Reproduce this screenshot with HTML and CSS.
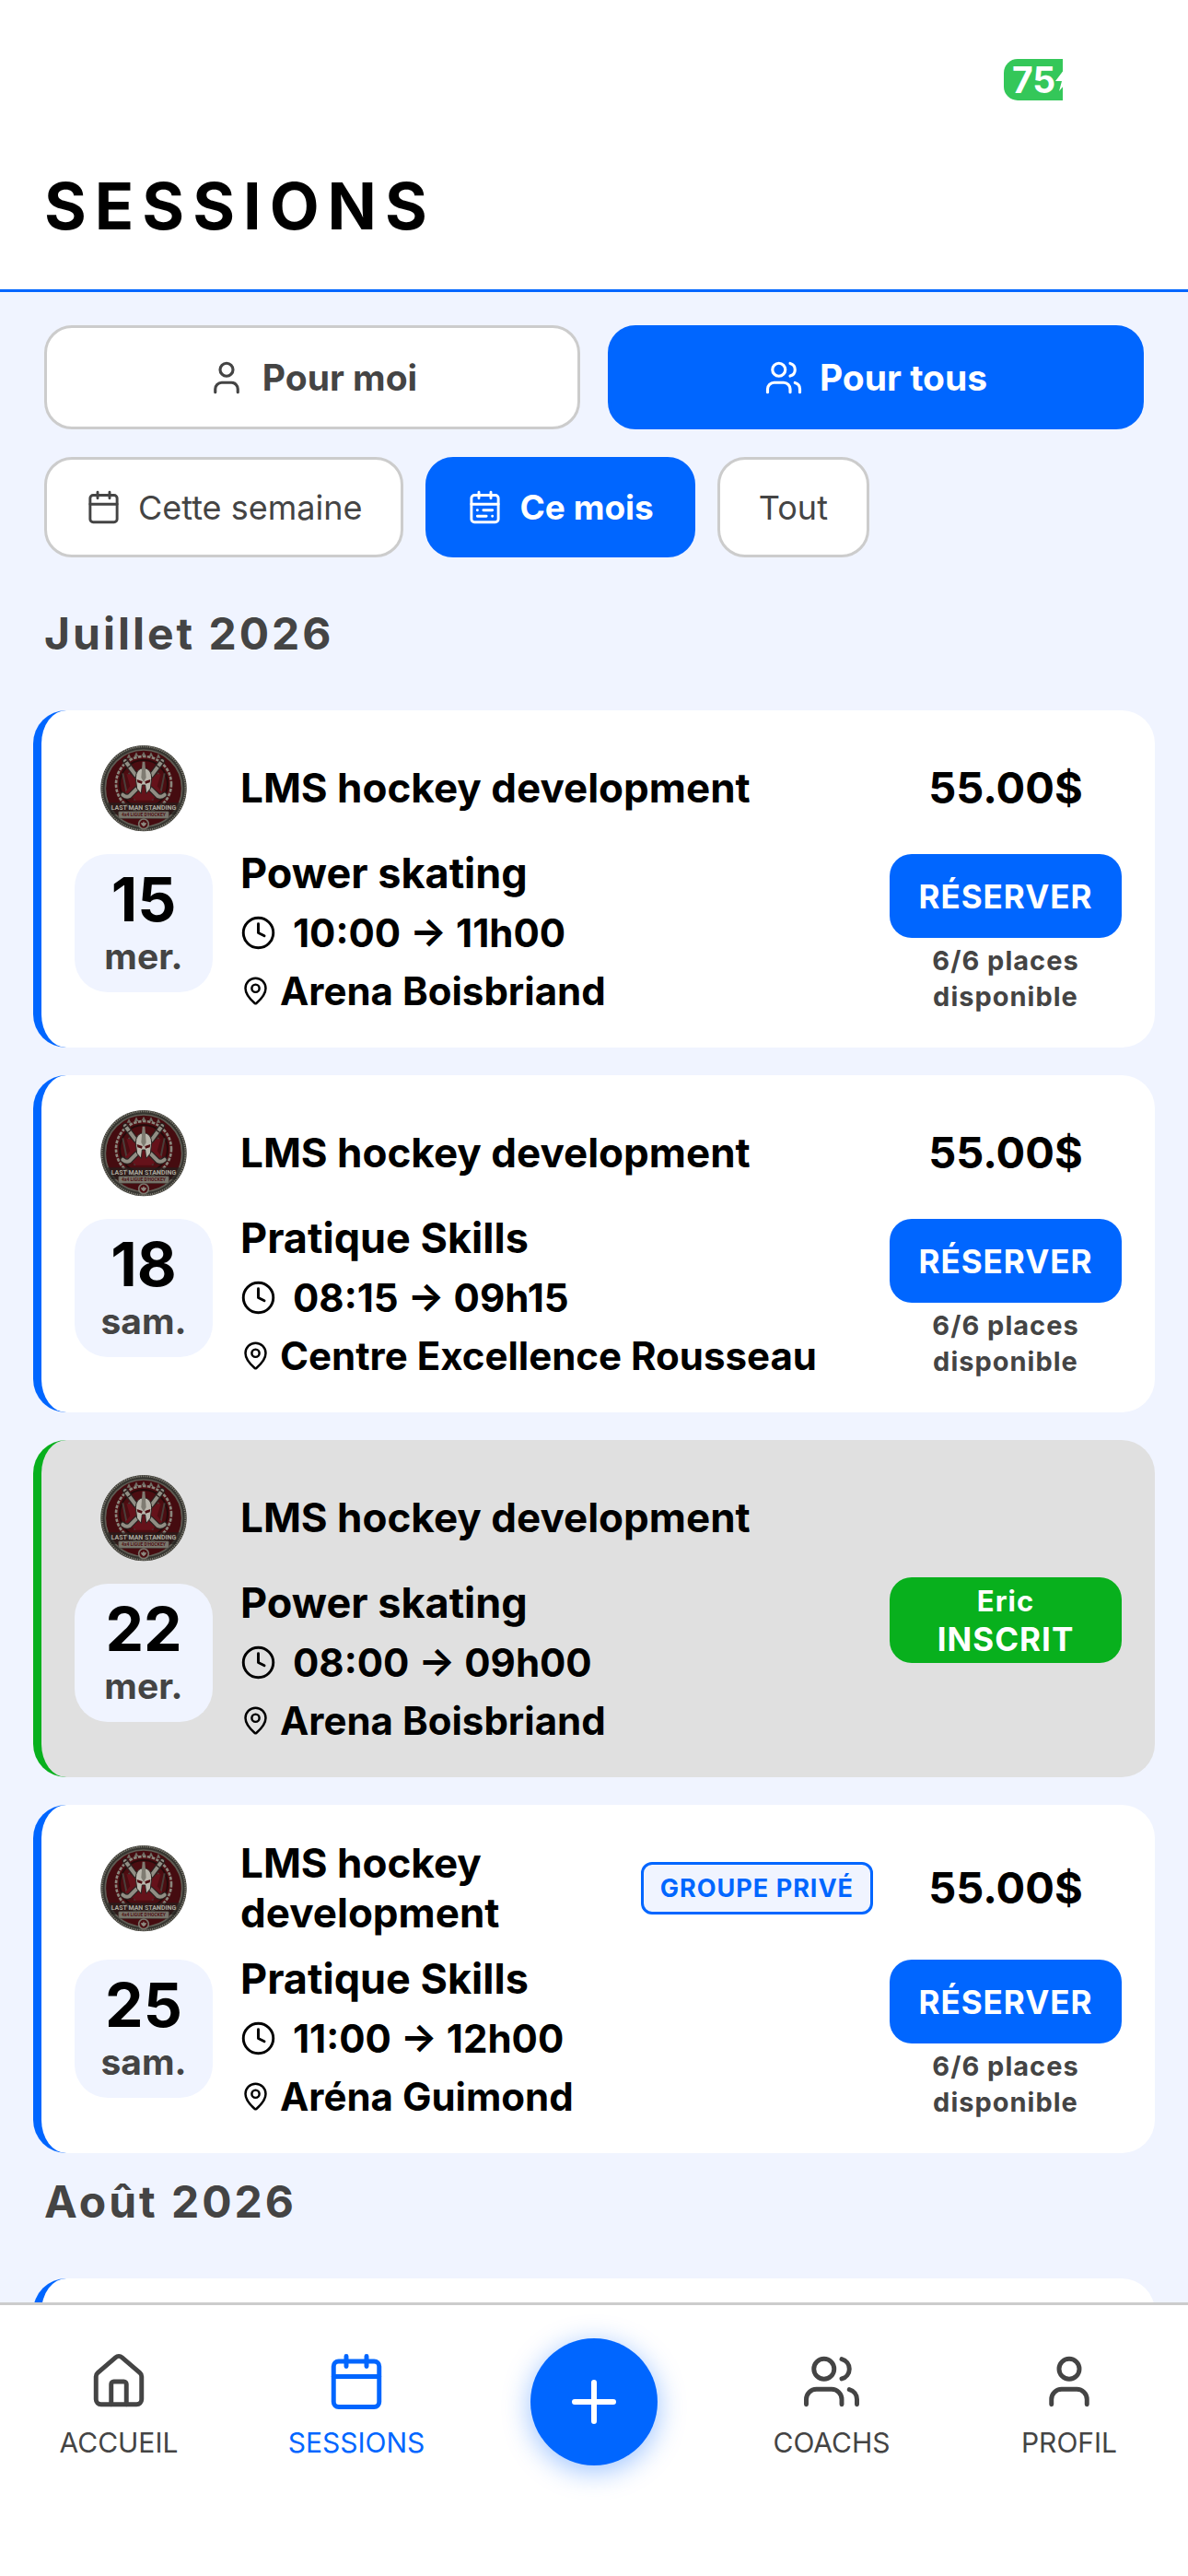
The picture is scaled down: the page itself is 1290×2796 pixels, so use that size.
FILE: index.html
```html
<!DOCTYPE html>
<html lang="fr">
<head>
<meta charset="utf-8">
<meta name="viewport" content="width=device-width, initial-scale=1">
<title>Sessions</title>
<link rel="stylesheet" href="styles.css">
</head>
<body>
<svg class="sprite" aria-hidden="true">
  <symbol id="user" viewBox="0 0 24 24"><path d="M19 21v-2a4 4 0 0 0-4-4H9a4 4 0 0 0-4 4v2"/><circle cx="12" cy="7" r="4"/></symbol>
  <symbol id="users" viewBox="0 0 24 24"><path d="M16 21v-2a4 4 0 0 0-4-4H6a4 4 0 0 0-4 4v2"/><circle cx="9" cy="7" r="4"/><path d="M22 21v-2a4 4 0 0 0-3-3.87"/><path d="M16 3.13a4 4 0 0 1 0 7.75"/></symbol>
  <symbol id="calendar" viewBox="0 0 24 24"><path d="M8 2v4M16 2v4M3 10h18"/><rect x="3" y="4" width="18" height="18" rx="2"/></symbol>
  <symbol id="calendar-range" viewBox="0 0 24 24"><path d="M8 2v4M16 2v4M3 10h18M17 14h-6M13 18H7M7 14h.01M17 18h.01"/><rect x="3" y="4" width="18" height="18" rx="2"/></symbol>
  <symbol id="clock" viewBox="0 0 24 24"><circle cx="12" cy="12" r="10"/><path d="M12 6v6l4 2"/></symbol>
  <symbol id="pin" viewBox="0 0 24 24"><path d="M20 10c0 4.993-5.539 10.193-7.399 11.799a1 1 0 0 1-1.202 0C9.539 20.193 4 14.993 4 10a8 8 0 0 1 16 0"/><circle cx="12" cy="10" r="3"/></symbol>
  <symbol id="home" viewBox="0 0 24 24"><path d="M15 21v-8a1 1 0 0 0-1-1h-4a1 1 0 0 0-1 1v8"/><path d="M3 10a2 2 0 0 1 .709-1.528l7-5.999a2 2 0 0 1 2.582 0l7 5.999A2 2 0 0 1 21 10v9a2 2 0 0 1-2 2H5a2 2 0 0 1-2-2z"/></symbol>
  <symbol id="plus" viewBox="0 0 24 24"><path d="M5 12h14M12 5v14"/></symbol>
  <symbol id="crest" viewBox="36 33 288 288">
    <circle cx="180" cy="179" r="140" fill="#35342f"/>
    <circle cx="180" cy="179" r="136" fill="none" stroke="#7b796f" stroke-width="6" stroke-dasharray="4 3"/>
    <circle cx="180" cy="179" r="125" fill="#450c10" stroke="#5f5d54" stroke-width="5"/>
    <circle cx="180" cy="165" r="90" fill="#4c0d11" stroke="#8a877d" stroke-width="8" stroke-dasharray="11 4"/>
    <circle cx="180" cy="165" r="78" fill="none" stroke="#240b0b" stroke-width="6"/>
    <path d="M132 128l20 90M228 128l-20 90M112 130l14 70M248 130l-14 70" stroke="#4a3f3a" stroke-width="6" fill="none"/>
    <path d="M180 110l26 26 30-4-12 40 16 20-36 26h-48l-36-26 16-20-12-40 30 4z" fill="#65121a"/>
    <g fill="#6f6c63"><path d="M132 66l7 14h-14zM156 61l7 14h-14zM180 59l7 14h-14zM204 61l7 14h-14zM228 66l7 14h-14z"/></g>
    <g fill="none" stroke-linecap="round" stroke-linejoin="round">
      <path d="M120 90l34 46M240 90l-34 46" stroke="#2b2321" stroke-width="19"/>
      <path d="M156 182l-22 22q-10 6-22-4M204 182l22 22q10 6 22-4" stroke="#2b2321" stroke-width="19"/>
      <path d="M120 90l34 46M240 90l-34 46" stroke="#918e84" stroke-width="12"/>
      <path d="M156 182l-22 22q-10 6-22-4M204 182l22 22q10 6 22-4" stroke="#918e84" stroke-width="12"/>
      <path d="M114 98l14-10M232 88l14 10M128 112l12-9M220 103l12 9" stroke="#2d1f1d" stroke-width="4"/>
    </g>
    <path d="M154 146q0-30 26-34 26 4 26 34l-4 34-14 16-3-28h-10l-3 28-14-16z" fill="#bab7ad" stroke="#2b2321" stroke-width="3"/>
    <path d="M176 92h8l4 52-8 14-8-14z" fill="#7f7c72"/>
    <path d="M158 150l18 6-2 8-14-4zM202 150l-18 6 2 8 14-4z" fill="#4c0d11"/>
    <path d="M62 226h236l-14 38H76z" fill="#241f1d" opacity=".7"/>
    <text x="180" y="248" text-anchor="middle" class="crest-name">LAST MAN STANDING</text>
    <rect x="98" y="254" width="164" height="23" rx="3" fill="#7a776d" stroke="#43413b" stroke-width="2"/>
    <text x="180" y="271" text-anchor="middle" class="crest-sub">4x4 LIGUE D'HOCKEY</text>
    <circle cx="180" cy="295" r="16" fill="#4c0d11" stroke="#7a776d" stroke-width="5"/>
    <path d="M180 286l3 6 6-1-2 7-7 6-7-6-2-7 6 1z" fill="#8d8a80"/>
  </symbol>
</svg>

<div class="app">
  <header class="header">
    <div class="status">
      <span class="battery">75<svg class="bolt" viewBox="0 0 16 24" aria-hidden="true"><path d="M10 0L0 13h7l-3 11 12-14H8z"/></svg></span>
    </div>
    <h1 class="title">SESSIONS</h1>
  </header>

  <main class="content">
    <div class="filters filters--who">
      <button type="button" class="filter filter--wide"><svg class="icon icon--md" aria-hidden="true"><use href="#user"/></svg>Pour moi</button>
      <button type="button" class="filter filter--wide filter--active"><svg class="icon icon--md" aria-hidden="true"><use href="#users"/></svg>Pour tous</button>
    </div>
    <div class="filters">
      <button type="button" class="filter"><svg class="icon" aria-hidden="true"><use href="#calendar"/></svg>Cette semaine</button>
      <button type="button" class="filter filter--active"><svg class="icon" aria-hidden="true"><use href="#calendar-range"/></svg>Ce mois</button>
      <button type="button" class="filter">Tout</button>
    </div>

    <section class="month">
      <h2 class="month-title">Juillet 2026</h2>
      <div class="cards">
        <article class="card">
          <svg class="crest" aria-hidden="true"><use href="#crest"/></svg>
          <div class="heading"><h3 class="name">LMS hockey development</h3></div>
          <p class="price">55.00$</p>
          <div class="date"><span class="day">15</span><span class="weekday">mer.</span></div>
          <div class="details">
            <p class="kind">Power skating</p>
            <p class="row row--time"><svg class="icon" aria-hidden="true"><use href="#clock"/></svg><span>10:00 → 11h00</span></p>
            <p class="row"><svg class="icon icon--sm" aria-hidden="true"><use href="#pin"/></svg><span>Arena Boisbriand</span></p>
          </div>
          <div class="action"><button type="button" class="book">RÉSERVER</button><p class="places">6/6 places disponible</p></div>
        </article>

        <article class="card">
          <svg class="crest" aria-hidden="true"><use href="#crest"/></svg>
          <div class="heading"><h3 class="name">LMS hockey development</h3></div>
          <p class="price">55.00$</p>
          <div class="date"><span class="day">18</span><span class="weekday">sam.</span></div>
          <div class="details">
            <p class="kind">Pratique Skills</p>
            <p class="row row--time"><svg class="icon" aria-hidden="true"><use href="#clock"/></svg><span>08:15 → 09h15</span></p>
            <p class="row"><svg class="icon icon--sm" aria-hidden="true"><use href="#pin"/></svg><span>Centre Excellence Rousseau</span></p>
          </div>
          <div class="action"><button type="button" class="book">RÉSERVER</button><p class="places">6/6 places disponible</p></div>
        </article>

        <article class="card card--registered">
          <svg class="crest" aria-hidden="true"><use href="#crest"/></svg>
          <div class="heading"><h3 class="name">LMS hockey development</h3></div>
          <div class="date"><span class="day">22</span><span class="weekday">mer.</span></div>
          <div class="details">
            <p class="kind">Power skating</p>
            <p class="row row--time"><svg class="icon" aria-hidden="true"><use href="#clock"/></svg><span>08:00 → 09h00</span></p>
            <p class="row"><svg class="icon icon--sm" aria-hidden="true"><use href="#pin"/></svg><span>Arena Boisbriand</span></p>
          </div>
          <button type="button" class="registered"><span class="player">Eric</span><span class="state">INSCRIT</span></button>
        </article>

        <article class="card">
          <svg class="crest" aria-hidden="true"><use href="#crest"/></svg>
          <div class="heading"><h3 class="name">LMS hockey development</h3><span class="badge">GROUPE PRIVÉ</span></div>
          <p class="price">55.00$</p>
          <div class="date"><span class="day">25</span><span class="weekday">sam.</span></div>
          <div class="details">
            <p class="kind">Pratique Skills</p>
            <p class="row row--time"><svg class="icon" aria-hidden="true"><use href="#clock"/></svg><span>11:00 → 12h00</span></p>
            <p class="row"><svg class="icon icon--sm" aria-hidden="true"><use href="#pin"/></svg><span>Aréna Guimond</span></p>
          </div>
          <div class="action"><button type="button" class="book">RÉSERVER</button><p class="places">6/6 places disponible</p></div>
        </article>
      </div>
    </section>

    <section class="month">
      <h2 class="month-title">Août 2026</h2>
      <div class="cards">
        <article class="card"></article>
      </div>
    </section>
  </main>

  <nav class="tabs" aria-label="Navigation principale">
    <a class="tab" href="#accueil"><svg class="icon icon--lg" aria-hidden="true"><use href="#home"/></svg>ACCUEIL</a>
    <a class="tab tab--active" href="#sessions"><svg class="icon icon--lg" aria-hidden="true"><use href="#calendar"/></svg>SESSIONS</a>
    <div class="tab"><button type="button" class="add" aria-label="Ajouter"><svg class="icon icon--add" aria-hidden="true"><use href="#plus"/></svg></button></div>
    <a class="tab" href="#coachs"><svg class="icon icon--lg" aria-hidden="true"><use href="#users"/></svg>COACHS</a>
    <a class="tab" href="#profil"><svg class="icon icon--lg" aria-hidden="true"><use href="#user"/></svg>PROFIL</a>
  </nav>
</div>
</body>
</html>
```
FILE: styles.css
```css
:root {
  --blue: #0066ff;
  --tint: #f0f4ff;
  --ink: #000;
  --muted: #444;
  --line: #ccc;
  --green: #08b01d;
}

* { box-sizing: border-box; }

body, h1, h2, h3, p { margin: 0; }

body {
  background: #fff;
  color: var(--ink);
  font-family: Inter, "Liberation Sans", sans-serif;
  font-weight: 700;
}

button {
  border: 0;
  padding: 0;
  color: inherit;
  font: inherit;
  cursor: pointer;
}

.sprite { display: none; }

.icon {
  flex: none;
  width: 39px;
  height: 39px;
  fill: none;
  stroke: currentColor;
  stroke-width: 1.8;
  stroke-linecap: round;
  stroke-linejoin: round;
}
.icon--sm { width: 33px; height: 33px; }
.icon--md { width: 42px; height: 42px; }
.icon--lg { width: 66px; height: 66px; }
.icon--add { width: 72px; height: 72px; stroke-width: 2; }

.app {
  display: flex;
  flex-direction: column;
  height: 100vh;
}

/* Header */
.header {
  flex: none;
  padding: 64px 48px 48px;
  border-bottom: 3px solid var(--blue);
}
.status {
  display: flex;
  justify-content: flex-end;
  padding-right: 88px;
}
.battery {
  display: flex;
  align-items: center;
  width: 64px;
  height: 45px;
  padding-left: 9px;
  border-radius: 15px 0 0 15px;
  overflow: hidden;
  background: #34c759;
  color: #fff;
  font-size: 39px;
}
.bolt {
  flex: none;
  width: 16px;
  height: 24px;
  fill: #fff;
}
.title {
  margin-top: 73px;
  font-size: 70px;
  line-height: 84px;
  letter-spacing: 9px;
}

/* Scrolling list */
.content {
  flex: 1;
  min-height: 0;
  padding: 36px 36px 0;
  overflow: hidden;
  background: var(--tint);
}
.filters {
  display: flex;
  gap: 24px;
  padding: 0 12px 30px;
}
.filters--who { gap: 30px; }
.filter {
  display: flex;
  align-items: center;
  justify-content: center;
  gap: 18px;
  height: 109px;
  padding: 0 42px;
  border: 3px solid var(--line);
  border-radius: 30px;
  background: #fff;
  color: var(--muted);
  font-size: 36px;
  font-weight: 400;
}
.filter--active {
  border-color: var(--blue);
  background: var(--blue);
  color: #fff;
  font-size: 37px;
  font-weight: 700;
}
.filter--wide {
  flex: 1;
  height: 113px;
  font-size: 39px;
  font-weight: 700;
}

.month-title {
  padding: 24px 12px 54px;
  color: var(--muted);
  font-size: 48px;
  line-height: 58px;
  letter-spacing: 3px;
}
.cards {
  display: flex;
  flex-direction: column;
  gap: 30px;
}

.card {
  display: grid;
  grid-template-columns: 150px 1fr 252px;
  grid-template-rows: minmax(96px, auto) auto;
  gap: 24px 18px;
  align-items: start;
  min-height: 366px;
  padding: 36px;
  border-left: 9px solid var(--blue);
  border-radius: 36px;
  background: #fff;
}
.card--registered {
  border-left-color: var(--green);
  background: #e0e0e0;
}
.crest {
  align-self: center;
  justify-self: center;
  width: 96px;
  height: 96px;
}
.crest-name {
  fill: #aaa79d;
  font-family: Roboto, sans-serif;
  font-size: 21px;
  font-weight: 700;
}
.crest-sub {
  fill: #4c0f12;
  font-family: Roboto, sans-serif;
  font-size: 15px;
  font-weight: 700;
}
.heading {
  display: flex;
  align-items: center;
  justify-content: space-between;
  gap: 18px;
  align-self: center;
  padding-left: 12px;
}
.name {
  font-size: 44px;
  line-height: 54px;
}
.badge {
  flex: none;
  padding: 0 18px;
  border: 3px solid var(--blue);
  border-radius: 12px;
  background: var(--tint);
  color: var(--blue);
  font-size: 27px;
  line-height: 51px;
  letter-spacing: 1px;
}
.price {
  align-self: center;
  font-size: 47px;
  line-height: 54px;
  text-align: center;
}
.date {
  display: flex;
  flex-direction: column;
  align-items: center;
  height: 150px;
  padding-top: 12px;
  border-radius: 36px;
  background: var(--tint);
}
.day {
  font-size: 66px;
  line-height: 75px;
}
.weekday {
  color: var(--muted);
  font-size: 39px;
  line-height: 48px;
}
.details {
  display: flex;
  flex-direction: column;
  gap: 12px;
  padding-left: 12px;
}
.kind {
  margin-bottom: 6px;
  font-size: 45px;
  line-height: 42px;
}
.row {
  display: flex;
  align-items: center;
  gap: 10px;
  font-size: 42px;
  line-height: 51px;
}
.row--time { gap: 18px; }

.book {
  display: block;
  width: 100%;
  height: 91px;
  border-radius: 24px;
  background: var(--blue);
  color: #fff;
  font-size: 35px;
  letter-spacing: 1px;
}
.places {
  padding: 5px 24px 0;
  color: var(--muted);
  font-size: 29px;
  line-height: 39px;
  letter-spacing: 1px;
  text-align: center;
}
.registered {
  display: flex;
  grid-area: 1 / 3 / 3 / 4;
  flex-direction: column;
  align-items: center;
  align-self: center;
  margin-top: 24px;
  padding: 6px 0 3px;
  border-radius: 24px;
  background: var(--green);
  color: #fff;
  letter-spacing: 1px;
}
.player {
  font-size: 31px;
  line-height: 39px;
}
.state {
  font-size: 35px;
  line-height: 45px;
}

/* Bottom tabs */
.tabs {
  display: grid;
  flex: none;
  grid-template-columns: repeat(5, 1fr);
  align-items: center;
  padding: 36px 0 120px;
  border-top: 3px solid var(--line);
  background: #fff;
}
.tab {
  display: flex;
  flex-direction: column;
  align-items: center;
  gap: 21px;
  color: var(--muted);
  font-size: 30px;
  font-weight: 400;
  line-height: 24px;
  text-decoration: none;
}
.tab--active { color: var(--blue); }
.add {
  display: grid;
  place-items: center;
  width: 138px;
  height: 138px;
  border-radius: 50%;
  background: var(--blue);
  box-shadow: 0 6px 30px rgba(0, 102, 255, .4);
  color: #fff;
}
```
